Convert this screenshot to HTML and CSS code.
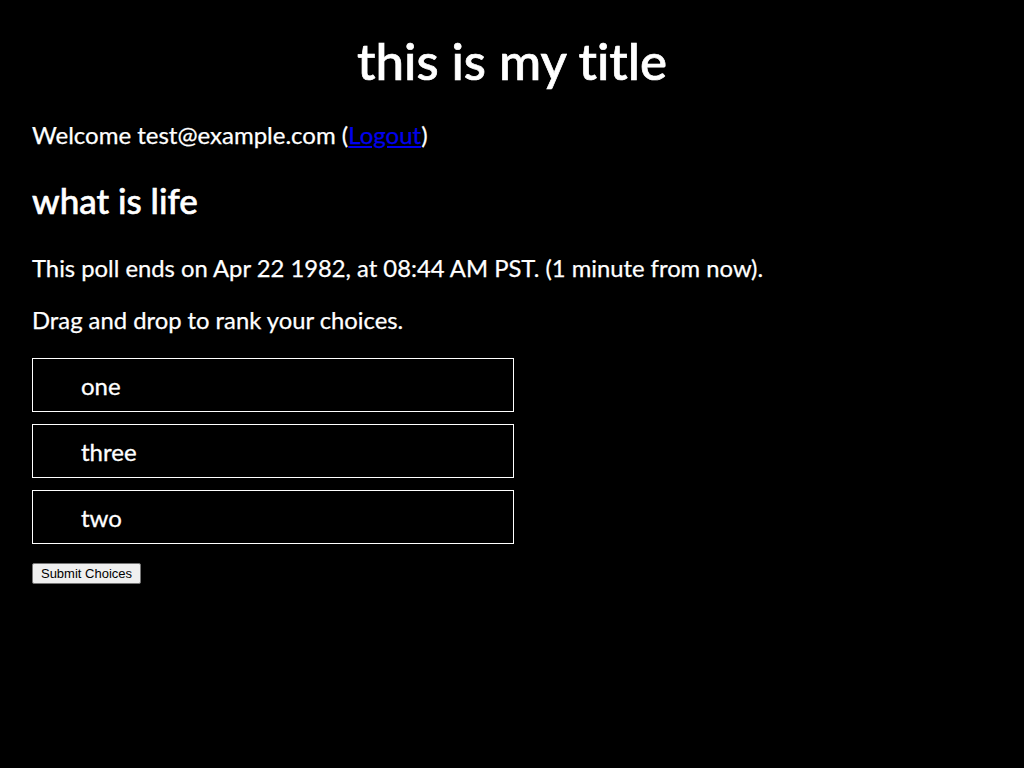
FILE: index.html
```html
<!DOCTYPE html>
<html>
<head>
<meta charset="utf-8">
<link rel="stylesheet" href="styles.css">
</head>
<body>
<div class="page">
  <h1 class="title">this is my title</h1>
  <p class="welcome">Welcome test@example.com (<a href="#" class="link">Logout</a>)</p>
  <h2 class="question">what is life</h2>
  <p class="text first">This poll ends on Apr 22 1982, at 08:44 AM PST. (1 minute from now).</p>
  <p class="text">Drag and drop to rank your choices.</p>
  <ul class="choices">
    <li class="choice">one</li>
    <li class="choice">three</li>
    <li class="choice">two</li>
  </ul>
  <button class="submit">Submit Choices</button>
</div>
</body>
</html>
```
FILE: styles.css
```css
html, body {
  margin: 0;
  padding: 0;
  background: #000;
}
body {
  color: #fff;
  font-family: "Lato", "Open Sans", sans-serif;
  font-variant-ligatures: none;
}
.page {
  padding: 0 32px;
}
.title {
  margin: 0;
  padding-top: 30px;
  text-align: center;
  font-size: 51px;
  font-weight: 500;
  line-height: 62px;
  -webkit-text-stroke: 0.7px #fff;
}
.welcome {
  margin: 28px 0 0;
  font-size: 24px;
  line-height: 30px;
  -webkit-text-stroke: 0.25px currentColor;
}
.link {
  color: #0000ee;
}
.question {
  margin: 29px 0 0;
  font-size: 35px;
  font-weight: 500;
  line-height: 42px;
  -webkit-text-stroke: 0.6px #fff;
}
.text {
  margin: 22px 0 0;
  font-size: 23.8px;
  line-height: 30px;
  -webkit-text-stroke: 0.25px #fff;
}
.text.first {
  margin-top: 32px;
}
.choices {
  list-style: none;
  margin: 23px 0 0;
  padding: 0;
  width: 482px;
  display: flex;
  flex-direction: column;
  gap: 12px;
}
.choice {
  box-sizing: border-box;
  height: 54px;
  border: 1px solid #fff;
  padding-left: 48px;
  display: flex;
  align-items: center;
  font-size: 24px;
  -webkit-text-stroke: 0.3px #fff;
}
.submit {
  margin-top: 19px;
  font-family: "Liberation Sans", Arial, sans-serif;
  font-size: 13px;
  color: #000;
  background: #efefef;
  border: 1px solid #767676;
  border-radius: 2px;
  padding: 1px 6px;
  height: 21px;
  width: 109px;
}
```
